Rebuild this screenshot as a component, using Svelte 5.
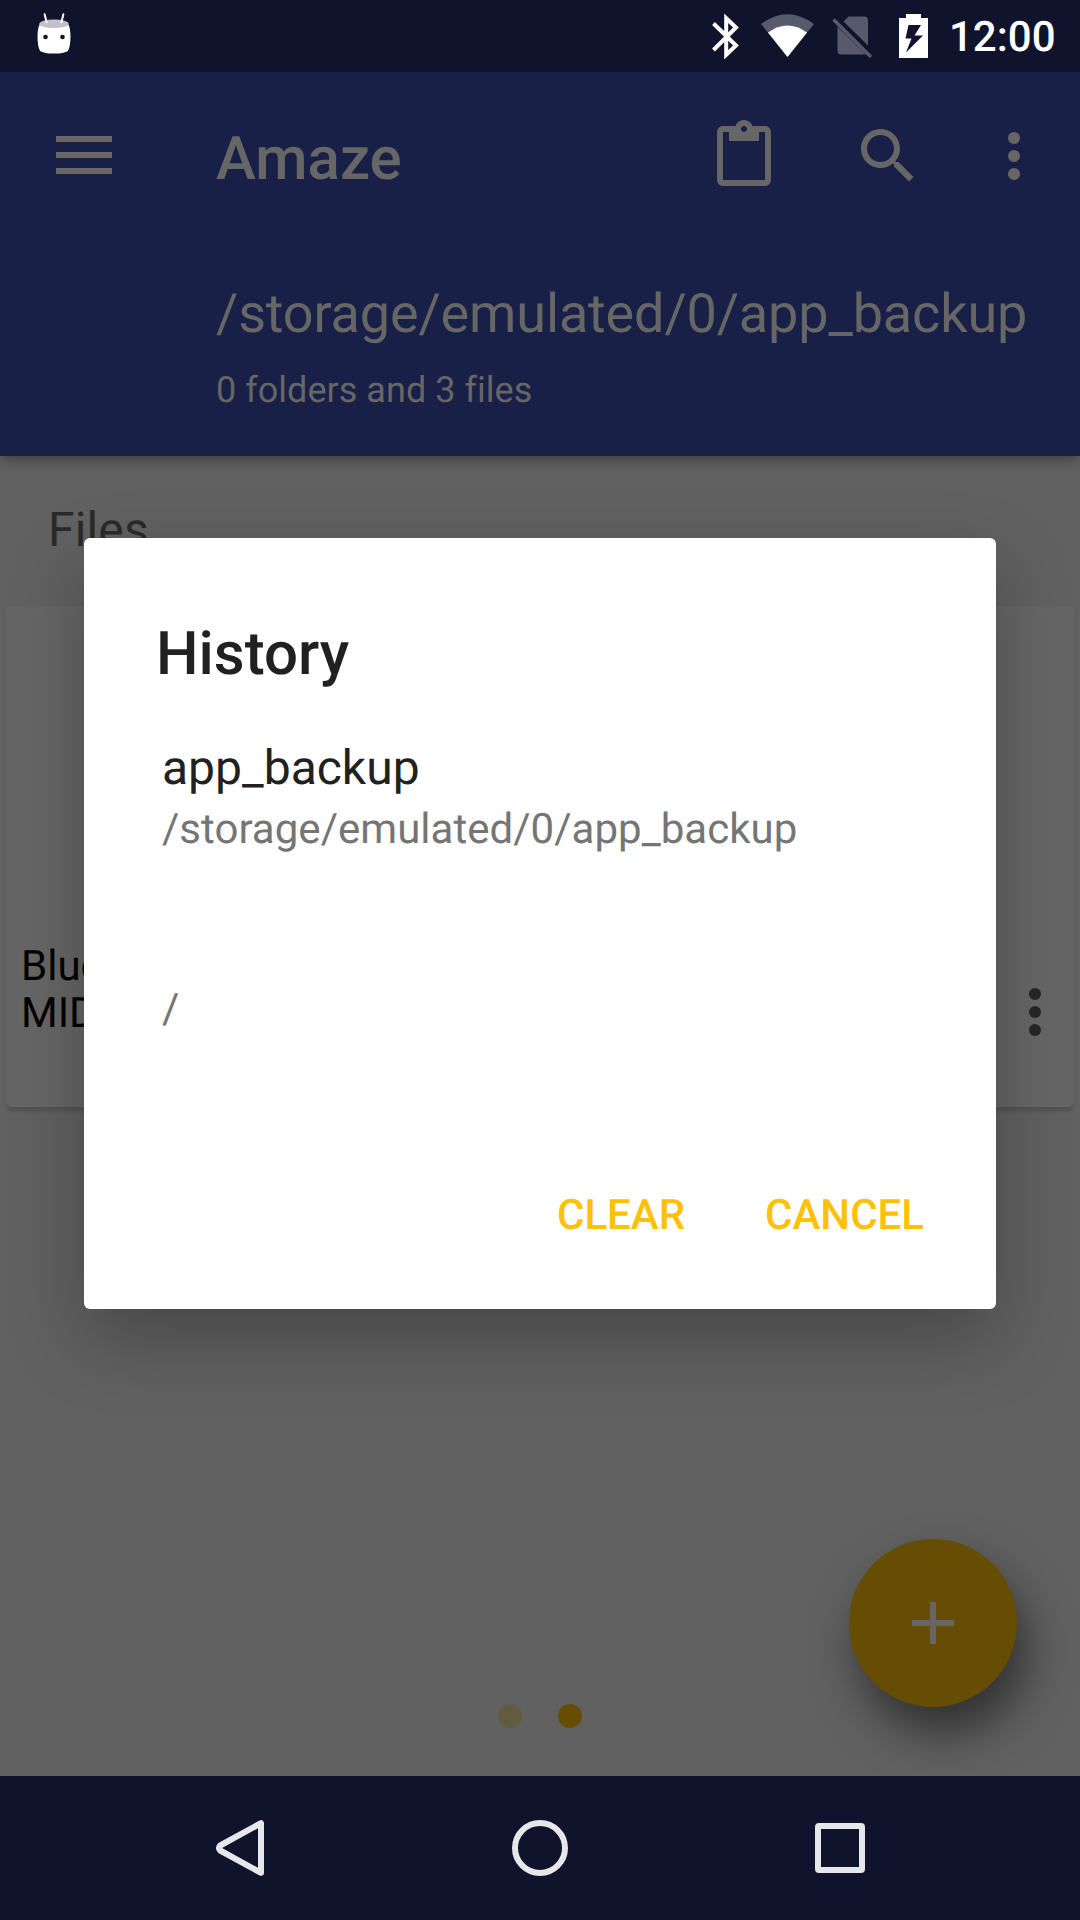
<script>
  const entries = [
    { name: 'app_backup', path: '/storage/emulated/0/app_backup' },
    { name: '', path: '/' }
  ];
  const actions = ['CLEAR', 'CANCEL'];
  const pages = [false, true];
</script>

{#snippet overflow()}
  <svg class="overflow" viewBox="0 0 24 24" width="72" height="72">
    <circle cx="12" cy="6" r="2" /><circle cx="12" cy="12" r="2" /><circle cx="12" cy="18" r="2" />
  </svg>
{/snippet}

<div class="screen">
  <div class="status">
    <svg class="droid" viewBox="0 0 36 44" width="36" height="44">
      <path d="M3.5 12.500C1 17 .6 32 3.800 38.500C6 42.600 30 42.600 32.200 38.500C35.400 32 35 17 32.500 12.500Z" fill="#fff" />
      <ellipse cx="18" cy="11.800" rx="14.700" ry="4.300" fill="#c1c2c9" />
      <path d="M8.600 2.200l2 8M27.400 2.200l-2 8" stroke="#fff" stroke-width="2" stroke-linecap="round" />
      <circle cx="9.500" cy="25" r="2.300" fill="#0f132b" /><circle cx="26.500" cy="25" r="2.300" fill="#0f132b" />
    </svg>
    <svg class="tray" viewBox="710 12 220 48" width="220" height="48">
      <path d="M713.500 23.500L736 45.500L726.200 54.800V18.200L736 27.500L713.500 50" fill="none" stroke="#fff" stroke-width="4" />
      <path d="M787.500 57L761 24Q787.500 4.500 814 24Z" fill="#575a6b" />
      <path d="M787.500 57L768 32.500Q787.500 18.500 807 32.500Z" fill="#fff" />
      <path d="M848.500 16.500H864Q868 16.500 868 20.500V45.500L843.500 21.500ZM837.500 26.500L866 54.500H841.500Q837.500 54.500 837.500 50.500Z" fill="#575a6b" />
      <path d="M833.500 19.500L871 57" fill="none" stroke="#575a6b" stroke-width="3.400" />
      <path fill-rule="evenodd" d="M906 14H921V18H928V58H899V18H906ZM908.500 25L905.500 38.500H911.500L906 52.500L923 35.500H914.500L921 25Z" fill="#fff" />
    </svg>
    <span class="clock">12:00</span>
  </div>

  <header>
    <div class="toolbar">
      <svg class="menu" viewBox="0 0 56 40" width="56" height="40">
        <path d="M0 0h56v6H0zM0 16h56v6H0zM0 32h56v6H0z" />
      </svg>
      <h1>Amaze</h1>
      <svg class="paste" viewBox="0 0 24 24" width="72" height="72">
        <path d="M19 2h-4.180C14.400.840 13.300 0 12 0c-1.300 0-2.400.840-2.820 2H5c-1.100 0-2 .9-2 2v16c0 1.100.9 2 2 2h14c1.100 0 2-.9 2-2V4c0-1.100-.9-2-2-2zm-7 0c.55 0 1 .45 1 1s-.45 1-1 1-1-.45-1-1 .45-1 1-1zm7 18H5V4h2v3h10V4h2v16z" />
      </svg>
      <svg class="search" viewBox="0 0 24 24" width="72" height="72">
        <path fill-rule="evenodd" d="M15.500 14h-.79l-.28-.27C15.410 12.590 16 11.110 16 9.500 16 5.910 13.090 3 9.500 3S3 5.910 3 9.500 5.910 16 9.500 16c1.610 0 3.090-.59 4.230-1.570l.27.28v.79l5 4.990L20.490 19l-4.990-5zM9.500 14C7.010 14 5 11.990 5 9.500S7.010 5 9.500 5 14 7.010 14 9.500 11.990 14 9.500 14z" />
      </svg>
      {@render overflow()}
    </div>
    <div class="path">/storage/emulated/0/app_backup</div>
    <div class="summary">0 folders and 3 files</div>
  </header>

  <main>
    <h2>Files</h2>
    <div class="card">
      <div class="filename">Blue<br />MIDI</div>
      {@render overflow()}
    </div>
    <div class="pager">
      {#each pages as current}
        <i class:current></i>
      {/each}
    </div>
    <div class="fab">
      <svg viewBox="0 0 42 42" width="42" height="42"><path d="M18 0h6v18h18v6H24v18h-6V24H0v-6h18z" /></svg>
    </div>
  </main>

  <nav>
    <svg viewBox="0 0 60 60" width="60" height="60"><path d="M51 5.200V54.800L10.200 32.500Q7.500 30 10.200 27.500Z" /></svg>
    <svg viewBox="0 0 60 60" width="60" height="60"><circle cx="30" cy="30" r="25" /></svg>
    <svg viewBox="0 0 60 60" width="60" height="60"><rect x="8" y="8" width="44" height="44" rx="1" /></svg>
  </nav>

  <section class="dialog">
    <h3>History</h3>
    {#each entries as entry}
      <div class="entry">
        <div class="name">{entry.name}</div>
        <div class="location">{entry.path}</div>
      </div>
    {/each}
    <div class="actions">
      {#each actions as action}<span>{action}</span>{/each}
    </div>
  </section>
</div>

<style>
  :global(body) { margin: 0; }
  .screen {
    position: relative;
    display: flex;
    flex-direction: column;
    width: 1080px;
    height: 1920px;
    overflow: hidden;
    background: #616161;
    font-family: Roboto, "Noto Sans", sans-serif;
    text-rendering: geometricPrecision;
    white-space: nowrap;
  }
  svg { display: block; flex: none; }
  h1, h2, h3 { margin: 0; font-weight: 500; }
  .status {
    display: flex;
    height: 72px;
    flex: none;
    box-sizing: border-box;
    padding: 12px 26px 0 36px;
    background: #0f132b;
  }
  .droid { fill: none; }
  .tray { margin-left: auto; }
  .clock {
    width: 105px;
    margin-left: 19px;
    padding-top: 1px;
    color: #fff;
    font-size: 42px;
    font-weight: 500;
    line-height: 50px;
  }
  header {
    position: relative;
    height: 384px;
    flex: none;
    box-sizing: border-box;
    background: #192047;
    color: #666;
    box-shadow: 0 3px 12px rgba(0, 0, 0, .38);
    clip-path: inset(0 0 -24px 0);
  }
  .toolbar {
    display: flex;
    align-items: center;
    height: 168px;
    padding: 0 30px 0 56px;
  }
  .toolbar svg { fill: #666; }
  h1 { margin-left: 104px; font-size: 60px; line-height: 70px; padding-top: 5px; }
  .paste { margin-left: auto; }
  .search { margin-left: 72px; }
  .toolbar .overflow { margin-left: 54px; }
  .path { padding: 43px 0 0 216px; font-size: 54px; line-height: 64px; letter-spacing: -.15px; }
  .summary { padding: 22px 0 0 216px; font-size: 36px; line-height: 42px; letter-spacing: .03px; font-variant-ligatures: common-ligatures; }
  main { display: flex; flex-direction: column; height: 1320px; flex: none; }
  h2 {
    padding: 46px 0 0 48px;
    height: 104px;
    font-size: 48px;
    font-weight: 400;
    line-height: 56px;
    letter-spacing: .15px;
    color: #2a2a2a;
  }
  .card {
    display: flex;
    justify-content: space-between;
    align-items: flex-start;
    height: 501px;
    margin: 0 6px;
    padding: 337px 3px 0 15px;
    box-sizing: border-box;
    border-radius: 2px 2px 6px 6px;
    background: #666;
    box-shadow: 0 5px 4px -1px rgba(0, 0, 0, .16);
  }
  .filename { font-size: 42px; line-height: 47px; color: #000; }
  .card .overflow { margin-top: 33px; fill: #272727; }
  .pager { display: flex; justify-content: center; gap: 36px; margin-top: 597px; }
  .pager i { width: 24px; height: 24px; border-radius: 50%; background: #625b42; }
  .pager i.current { background: #664d03; }
  .fab {
    position: absolute;
    left: 849px;
    top: 1539px;
    display: grid;
    place-items: center;
    width: 168px;
    height: 168px;
    border-radius: 50%;
    background: #664d03;
    box-shadow: 10px 26px 46px rgba(0, 0, 0, .5);
  }
  .fab svg { fill: #666; }
  nav {
    position: relative;
    display: flex;
    justify-content: center;
    gap: 240px;
    height: 144px;
    flex: none;
    box-sizing: border-box;
    padding-top: 42px;
    background: #0f132b;
  }
  nav svg { fill: none; stroke: #e7e7e9; stroke-width: 6; stroke-linejoin: round; }
  .dialog {
    position: absolute;
    left: 84px;
    top: 538px;
    width: 912px;
    height: 771px;
    box-sizing: border-box;
    border-radius: 6px;
    background: #fff;
    box-shadow: 0 30px 74px rgba(0, 0, 0, .27);
    color: #212121;
  }
  h3 { padding: 81px 0 0 72px; font-size: 60px; line-height: 70px; }
  .entry { height: 180px; padding: 0 0 0 78px; box-sizing: border-box; }
  h3 + .entry { margin-top: 51px; }
  .name { height: 65px; font-size: 48px; line-height: 56px; }
  .location { font-size: 42px; line-height: 50px; color: #757575; letter-spacing: .03px; }
  .actions {
    display: flex;
    justify-content: flex-end;
    gap: 80px;
    padding: 91px 72px 0 0;
    color: #ffc107;
    font-size: 42px;
    font-weight: 500;
    line-height: 50px;
  }
</style>
